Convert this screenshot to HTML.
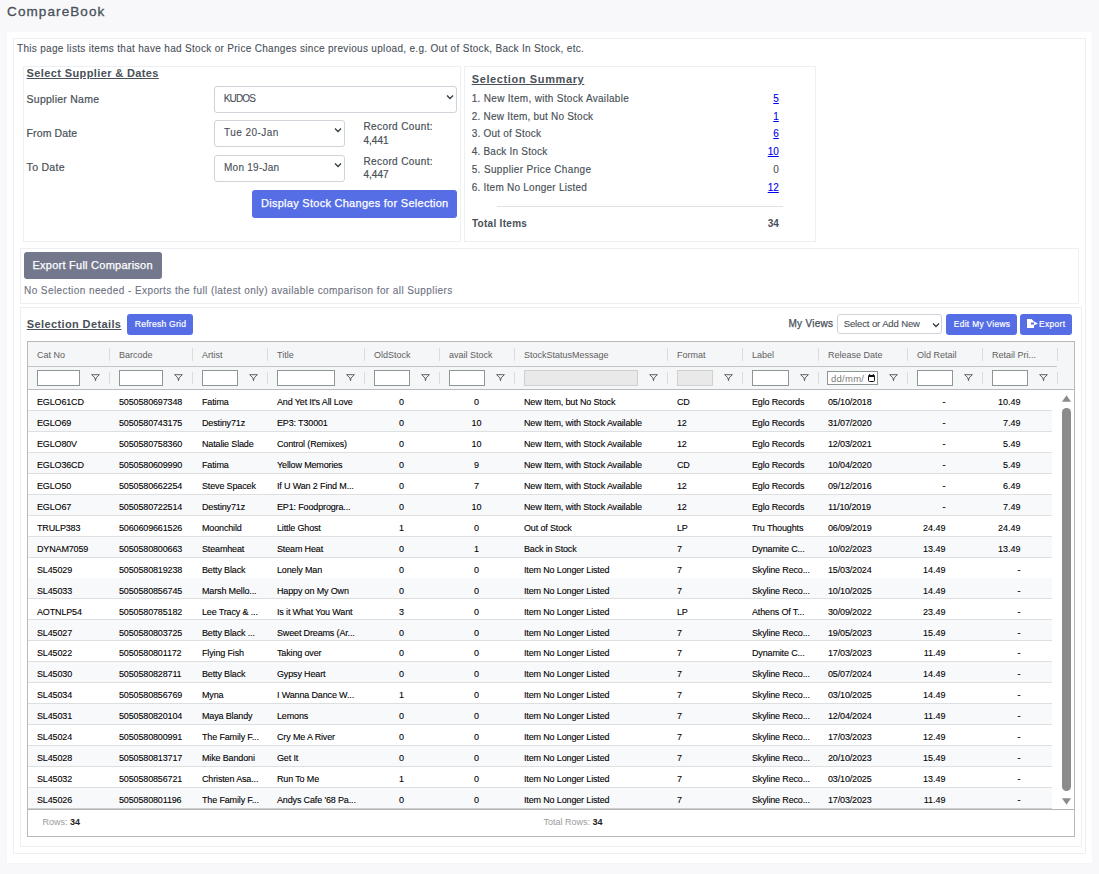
<!DOCTYPE html>
<html><head><meta charset="utf-8"><style>
html,body{margin:0;padding:0;}
body{width:1099px;height:874px;background:#f8f8fb;position:relative;overflow:hidden;font-family:"Liberation Sans",sans-serif;}
.t{position:absolute;white-space:pre;}
.b{position:absolute;}
</style></head><body>
<div class="b" style="left:7px;top:32px;width:1085px;height:831px;background:#fff;box-shadow:0 0 1px rgba(18,38,63,.06);"></div>
<div class="b" style="left:13px;top:38px;width:1073px;height:816px;border:1px solid #eeeff2;box-sizing:border-box;"></div>
<span class="t" style="left:7.10px;top:4.57px;font-size:13.5px;line-height:13.5px;color:#495057;letter-spacing:1.090px;-webkit-text-stroke:0.3px #495057;">CompareBook</span>
<span class="t" style="left:17.00px;top:44.33px;font-size:10px;line-height:10px;color:#495057;letter-spacing:0.312px;-webkit-text-stroke:0.1px #495057;">This page lists items that have had Stock or Price Changes since previous upload, e.g. Out of Stock, Back In Stock, etc.</span>
<div class="b" style="left:23px;top:66px;width:438px;height:176px;border:1px solid #eeeff2;box-sizing:border-box;"></div>
<span class="t" style="left:26.60px;top:67.69px;font-size:11px;line-height:11px;color:#495057;font-weight:bold;letter-spacing:0.382px;text-decoration:underline;">Select Supplier &amp; Dates</span>
<span class="t" style="left:26.60px;top:93.51px;font-size:10.5px;line-height:10.5px;color:#495057;letter-spacing:0.246px;-webkit-text-stroke:0.2px #495057;">Supplier Name</span>
<span class="t" style="left:26.60px;top:127.61px;font-size:10.5px;line-height:10.5px;color:#495057;letter-spacing:0.101px;-webkit-text-stroke:0.2px #495057;">From Date</span>
<span class="t" style="left:26.60px;top:162.11px;font-size:10.5px;line-height:10.5px;color:#495057;letter-spacing:0.286px;-webkit-text-stroke:0.2px #495057;">To Date</span>
<div class="b" style="left:214px;top:86px;width:243px;height:27px;border:1px solid #ced4da;border-radius:3px;box-sizing:border-box;background:#fff;"></div>
<span class="t" style="left:223.70px;top:93.94px;font-size:10px;line-height:10px;color:#495057;letter-spacing:-0.816px;-webkit-text-stroke:0.12px #495057;">KUDOS</span>
<div class="b" style="left:214px;top:120px;width:131px;height:27px;border:1px solid #ced4da;border-radius:3px;box-sizing:border-box;background:#fff;"></div>
<span class="t" style="left:224.10px;top:128.03px;font-size:10px;line-height:10px;color:#495057;letter-spacing:0.432px;-webkit-text-stroke:0.12px #495057;">Tue 20-Jan</span>
<div class="b" style="left:214px;top:155px;width:131px;height:27px;border:1px solid #ced4da;border-radius:3px;box-sizing:border-box;background:#fff;"></div>
<span class="t" style="left:224.00px;top:163.03px;font-size:10px;line-height:10px;color:#495057;letter-spacing:0.255px;-webkit-text-stroke:0.12px #495057;">Mon 19-Jan</span>
<svg class="b" style="left:445.5px;top:93.5px" width="8" height="6" viewBox="0 0 8 6"><path d="M1 1.5 L4 4.5 L7 1.5" fill="none" stroke="#343a40" stroke-width="1.3"/></svg>
<svg class="b" style="left:334px;top:127.30000000000001px" width="8" height="6" viewBox="0 0 8 6"><path d="M1 1.5 L4 4.5 L7 1.5" fill="none" stroke="#343a40" stroke-width="1.3"/></svg>
<svg class="b" style="left:334px;top:162.3px" width="8" height="6" viewBox="0 0 8 6"><path d="M1 1.5 L4 4.5 L7 1.5" fill="none" stroke="#343a40" stroke-width="1.3"/></svg>
<span class="t" style="left:363.50px;top:121.94px;font-size:10px;line-height:10px;color:#495057;letter-spacing:0.385px;-webkit-text-stroke:0.2px #495057;">Record Count:</span>
<span class="t" style="left:363.50px;top:135.84px;font-size:10px;line-height:10px;color:#495057;-webkit-text-stroke:0.2px #495057;">4,441</span>
<span class="t" style="left:363.50px;top:156.73px;font-size:10px;line-height:10px;color:#495057;letter-spacing:0.385px;-webkit-text-stroke:0.2px #495057;">Record Count:</span>
<span class="t" style="left:363.50px;top:170.44px;font-size:10px;line-height:10px;color:#495057;-webkit-text-stroke:0.2px #495057;">4,447</span>
<div class="b" style="left:252px;top:190px;width:205px;height:28px;background:#556ee6;border-radius:3px;"></div>
<span class="t" style="left:261.00px;top:197.69px;font-size:11px;line-height:11px;color:#fff;letter-spacing:0.273px;-webkit-text-stroke:0.25px #fff;">Display Stock Changes for Selection</span>
<div class="b" style="left:464px;top:66px;width:352px;height:176px;border:1px solid #eeeff2;box-sizing:border-box;"></div>
<span class="t" style="left:471.70px;top:73.99px;font-size:11px;line-height:11px;color:#495057;font-weight:bold;letter-spacing:0.619px;text-decoration:underline;">Selection Summary</span>
<span class="t" style="left:471.70px;top:93.73px;font-size:10px;line-height:10px;color:#495057;letter-spacing:0.312px;-webkit-text-stroke:0.15px #495057;">1. New Item, with Stock Available</span>
<span class="t" style="left:773.24px;top:93.73px;font-size:10px;line-height:10px;color:#0000ee;text-decoration:underline;-webkit-text-stroke:0.1px #0000ee;">5</span>
<span class="t" style="left:471.70px;top:111.53px;font-size:10px;line-height:10px;color:#495057;letter-spacing:0.22px;-webkit-text-stroke:0.15px #495057;">2. New Item, but No Stock</span>
<span class="t" style="left:773.24px;top:111.53px;font-size:10px;line-height:10px;color:#0000ee;text-decoration:underline;-webkit-text-stroke:0.1px #0000ee;">1</span>
<span class="t" style="left:471.70px;top:129.44px;font-size:10px;line-height:10px;color:#495057;letter-spacing:0.22px;-webkit-text-stroke:0.15px #495057;">3. Out of Stock</span>
<span class="t" style="left:773.24px;top:129.44px;font-size:10px;line-height:10px;color:#0000ee;text-decoration:underline;-webkit-text-stroke:0.1px #0000ee;">6</span>
<span class="t" style="left:471.70px;top:146.63px;font-size:10px;line-height:10px;color:#495057;letter-spacing:0.22px;-webkit-text-stroke:0.15px #495057;">4. Back In Stock</span>
<span class="t" style="left:767.68px;top:146.63px;font-size:10px;line-height:10px;color:#0000ee;text-decoration:underline;-webkit-text-stroke:0.1px #0000ee;">10</span>
<span class="t" style="left:471.70px;top:164.63px;font-size:10px;line-height:10px;color:#495057;letter-spacing:0.357px;-webkit-text-stroke:0.15px #495057;">5. Supplier Price Change</span>
<span class="t" style="left:773.24px;top:164.63px;font-size:10px;line-height:10px;color:#495057;-webkit-text-stroke:0.1px #495057;">0</span>
<span class="t" style="left:471.70px;top:182.53px;font-size:10px;line-height:10px;color:#495057;letter-spacing:0.247px;-webkit-text-stroke:0.15px #495057;">6. Item No Longer Listed</span>
<span class="t" style="left:767.68px;top:182.53px;font-size:10px;line-height:10px;color:#0000ee;text-decoration:underline;-webkit-text-stroke:0.1px #0000ee;">12</span>
<div class="b" style="left:497px;top:206px;width:286px;height:1px;background:#dfe2e6;"></div>
<span class="t" style="left:471.90px;top:218.53px;font-size:10px;line-height:10px;color:#495057;font-weight:bold;letter-spacing:0.295px;">Total Items</span>
<span class="t" style="left:767.68px;top:218.53px;font-size:10px;line-height:10px;color:#495057;font-weight:bold;">34</span>
<div class="b" style="left:20px;top:248px;width:1059px;height:56px;border:1px solid #eeeff2;box-sizing:border-box;"></div>
<div class="b" style="left:24px;top:252px;width:138px;height:27px;background:#74788d;border-radius:3px;"></div>
<span class="t" style="left:32.50px;top:259.69px;font-size:11px;line-height:11px;color:#fff;letter-spacing:0.246px;-webkit-text-stroke:0.25px #fff;">Export Full Comparison</span>
<span class="t" style="left:24.00px;top:286.24px;font-size:10px;line-height:10px;color:#6c717e;letter-spacing:0.417px;-webkit-text-stroke:0.1px #6c717e;">No Selection needed - Exports the full (latest only) available comparison for all Suppliers</span>
<div class="b" style="left:20px;top:307px;width:1062px;height:540px;border:1px solid #eeeff2;box-sizing:border-box;"></div>
<span class="t" style="left:26.80px;top:318.69px;font-size:11px;line-height:11px;color:#495057;font-weight:bold;letter-spacing:0.385px;text-decoration:underline;">Selection Details</span>
<div class="b" style="left:127px;top:314px;width:66px;height:21px;background:#556ee6;border-radius:3px;"></div>
<span class="t" style="left:134.80px;top:320.12px;font-size:8.6px;line-height:8.6px;color:#fff;letter-spacing:0.223px;-webkit-text-stroke:0.2px #fff;">Refresh Grid</span>
<span class="t" style="left:788.50px;top:319.04px;font-size:10px;line-height:10px;color:#495057;letter-spacing:0.271px;-webkit-text-stroke:0.25px #495057;">My Views</span>
<div class="b" style="left:837px;top:314px;width:105px;height:20px;border:1px solid #ced4da;border-radius:3px;box-sizing:border-box;background:#fff;"></div>
<span class="t" style="left:843.70px;top:318.76px;font-size:9.5px;line-height:9.5px;color:#495057;letter-spacing:-0.116px;-webkit-text-stroke:0.1px #495057;">Select or Add New</span>
<svg class="b" style="left:932px;top:321.5px" width="8" height="6" viewBox="0 0 8 6"><path d="M1 1.5 L4 4.5 L7 1.5" fill="none" stroke="#343a40" stroke-width="1.3"/></svg>
<div class="b" style="left:946px;top:314px;width:71px;height:21px;background:#556ee6;border-radius:3px;"></div>
<span class="t" style="left:953.80px;top:320.17px;font-size:8.3px;line-height:8.3px;color:#fff;letter-spacing:0.353px;-webkit-text-stroke:0.2px #fff;">Edit My Views</span>
<div class="b" style="left:1020px;top:314px;width:52px;height:21px;background:#556ee6;border-radius:3px;"></div>
<svg class="b" style="left:1026px;top:318px" width="13" height="11" viewBox="0 0 13 11"><path d="M1 1 H5.5 L8 3.5 V4.5 H5 V6.5 H8 V10 H1 Z" fill="#fff"/><path d="M8 3.5 L12 5.5 L8 7.5 Z" fill="#fff"/></svg>
<span class="t" style="left:1039.10px;top:320.17px;font-size:8.3px;line-height:8.3px;color:#fff;letter-spacing:0.382px;-webkit-text-stroke:0.2px #fff;">Export</span>
<div class="b" style="left:27px;top:341px;width:1048px;height:496px;border:1px solid #b9b9b9;box-sizing:border-box;background:#fff;"></div>
<div class="b" style="left:28px;top:342px;width:1046px;height:47px;background:#f5f6f7;"></div>
<div class="b" style="left:28px;top:366px;width:1029px;height:1px;background:#c3c6c9;"></div>
<div class="b" style="left:28px;top:389px;width:1046px;height:1px;background:#b9bcbf;"></div>
<div class="b" style="left:109px;top:348px;width:1px;height:13px;background:#dcdcdc;"></div>
<div class="b" style="left:109px;top:372px;width:1px;height:12px;background:#dcdcdc;"></div>
<div class="b" style="left:192px;top:348px;width:1px;height:13px;background:#dcdcdc;"></div>
<div class="b" style="left:192px;top:372px;width:1px;height:12px;background:#dcdcdc;"></div>
<div class="b" style="left:267px;top:348px;width:1px;height:13px;background:#dcdcdc;"></div>
<div class="b" style="left:267px;top:372px;width:1px;height:12px;background:#dcdcdc;"></div>
<div class="b" style="left:364px;top:348px;width:1px;height:13px;background:#dcdcdc;"></div>
<div class="b" style="left:364px;top:372px;width:1px;height:12px;background:#dcdcdc;"></div>
<div class="b" style="left:439px;top:348px;width:1px;height:13px;background:#dcdcdc;"></div>
<div class="b" style="left:439px;top:372px;width:1px;height:12px;background:#dcdcdc;"></div>
<div class="b" style="left:514px;top:348px;width:1px;height:13px;background:#dcdcdc;"></div>
<div class="b" style="left:514px;top:372px;width:1px;height:12px;background:#dcdcdc;"></div>
<div class="b" style="left:667px;top:348px;width:1px;height:13px;background:#dcdcdc;"></div>
<div class="b" style="left:667px;top:372px;width:1px;height:12px;background:#dcdcdc;"></div>
<div class="b" style="left:742px;top:348px;width:1px;height:13px;background:#dcdcdc;"></div>
<div class="b" style="left:742px;top:372px;width:1px;height:12px;background:#dcdcdc;"></div>
<div class="b" style="left:818px;top:348px;width:1px;height:13px;background:#dcdcdc;"></div>
<div class="b" style="left:818px;top:372px;width:1px;height:12px;background:#dcdcdc;"></div>
<div class="b" style="left:907px;top:348px;width:1px;height:13px;background:#dcdcdc;"></div>
<div class="b" style="left:907px;top:372px;width:1px;height:12px;background:#dcdcdc;"></div>
<div class="b" style="left:982px;top:348px;width:1px;height:13px;background:#dcdcdc;"></div>
<div class="b" style="left:982px;top:372px;width:1px;height:12px;background:#dcdcdc;"></div>
<div class="b" style="left:1057px;top:348px;width:1px;height:13px;background:#dcdcdc;"></div>
<div class="b" style="left:1057px;top:372px;width:1px;height:12px;background:#dcdcdc;"></div>
<span class="t" style="left:37.00px;top:350.88px;font-size:9px;line-height:9px;color:#606060;">Cat No</span>
<div class="b" style="left:37px;top:370px;width:43px;height:16px;background:#fff;border:1px solid #8a9794;box-sizing:border-box;"></div>
<svg class="b" style="left:90.5px;top:374px" width="9" height="8" viewBox="0 0 9 8"><path d="M0.6 0.7 H8.4 L5.1 3.9 L4.5 6.8 L3.9 3.9 Z" fill="none" stroke="#555b66" stroke-width="0.95" stroke-linejoin="round"/></svg>
<span class="t" style="left:119.00px;top:350.88px;font-size:9px;line-height:9px;color:#606060;">Barcode</span>
<div class="b" style="left:119px;top:370px;width:44px;height:16px;background:#fff;border:1px solid #8a9794;box-sizing:border-box;"></div>
<svg class="b" style="left:173.5px;top:374px" width="9" height="8" viewBox="0 0 9 8"><path d="M0.6 0.7 H8.4 L5.1 3.9 L4.5 6.8 L3.9 3.9 Z" fill="none" stroke="#555b66" stroke-width="0.95" stroke-linejoin="round"/></svg>
<span class="t" style="left:202.00px;top:350.88px;font-size:9px;line-height:9px;color:#606060;">Artist</span>
<div class="b" style="left:202px;top:370px;width:36px;height:16px;background:#fff;border:1px solid #8a9794;box-sizing:border-box;"></div>
<svg class="b" style="left:248.5px;top:374px" width="9" height="8" viewBox="0 0 9 8"><path d="M0.6 0.7 H8.4 L5.1 3.9 L4.5 6.8 L3.9 3.9 Z" fill="none" stroke="#555b66" stroke-width="0.95" stroke-linejoin="round"/></svg>
<span class="t" style="left:277.00px;top:350.88px;font-size:9px;line-height:9px;color:#606060;">Title</span>
<div class="b" style="left:277px;top:370px;width:58px;height:16px;background:#fff;border:1px solid #8a9794;box-sizing:border-box;"></div>
<svg class="b" style="left:345.5px;top:374px" width="9" height="8" viewBox="0 0 9 8"><path d="M0.6 0.7 H8.4 L5.1 3.9 L4.5 6.8 L3.9 3.9 Z" fill="none" stroke="#555b66" stroke-width="0.95" stroke-linejoin="round"/></svg>
<span class="t" style="left:374.00px;top:350.88px;font-size:9px;line-height:9px;color:#606060;">OldStock</span>
<div class="b" style="left:374px;top:370px;width:36px;height:16px;background:#fff;border:1px solid #8a9794;box-sizing:border-box;"></div>
<svg class="b" style="left:420.5px;top:374px" width="9" height="8" viewBox="0 0 9 8"><path d="M0.6 0.7 H8.4 L5.1 3.9 L4.5 6.8 L3.9 3.9 Z" fill="none" stroke="#555b66" stroke-width="0.95" stroke-linejoin="round"/></svg>
<span class="t" style="left:449.00px;top:350.88px;font-size:9px;line-height:9px;color:#606060;">avail Stock</span>
<div class="b" style="left:449px;top:370px;width:36px;height:16px;background:#fff;border:1px solid #8a9794;box-sizing:border-box;"></div>
<svg class="b" style="left:495.5px;top:374px" width="9" height="8" viewBox="0 0 9 8"><path d="M0.6 0.7 H8.4 L5.1 3.9 L4.5 6.8 L3.9 3.9 Z" fill="none" stroke="#555b66" stroke-width="0.95" stroke-linejoin="round"/></svg>
<span class="t" style="left:524.00px;top:350.88px;font-size:9px;line-height:9px;color:#606060;">StockStatusMessage</span>
<div class="b" style="left:524px;top:370px;width:114px;height:16px;background:#e9e9e9;border:1px solid #d0d0d0;box-sizing:border-box;"></div>
<svg class="b" style="left:648.5px;top:374px" width="9" height="8" viewBox="0 0 9 8"><path d="M0.6 0.7 H8.4 L5.1 3.9 L4.5 6.8 L3.9 3.9 Z" fill="none" stroke="#555b66" stroke-width="0.95" stroke-linejoin="round"/></svg>
<span class="t" style="left:677.00px;top:350.88px;font-size:9px;line-height:9px;color:#606060;">Format</span>
<div class="b" style="left:677px;top:370px;width:36px;height:16px;background:#e9e9e9;border:1px solid #d0d0d0;box-sizing:border-box;"></div>
<svg class="b" style="left:723.5px;top:374px" width="9" height="8" viewBox="0 0 9 8"><path d="M0.6 0.7 H8.4 L5.1 3.9 L4.5 6.8 L3.9 3.9 Z" fill="none" stroke="#555b66" stroke-width="0.95" stroke-linejoin="round"/></svg>
<span class="t" style="left:752.00px;top:350.88px;font-size:9px;line-height:9px;color:#606060;">Label</span>
<div class="b" style="left:752px;top:370px;width:37px;height:16px;background:#fff;border:1px solid #8a9794;box-sizing:border-box;"></div>
<svg class="b" style="left:799.5px;top:374px" width="9" height="8" viewBox="0 0 9 8"><path d="M0.6 0.7 H8.4 L5.1 3.9 L4.5 6.8 L3.9 3.9 Z" fill="none" stroke="#555b66" stroke-width="0.95" stroke-linejoin="round"/></svg>
<span class="t" style="left:828.00px;top:350.88px;font-size:9px;line-height:9px;color:#606060;">Release Date</span>
<div class="b" style="left:827px;top:371px;width:51px;height:14px;background:#fff;border:1px solid #8a9794;box-sizing:border-box;"></div>
<span class="t" style="left:831.00px;top:373.76px;font-size:9.5px;line-height:9.5px;color:#7a7a7a;letter-spacing:0.265px;">dd/mm/</span>
<svg class="b" style="left:868px;top:374px" width="7" height="8" viewBox="0 0 7 8"><rect x="0.5" y="1.5" width="6" height="6" rx="1" fill="none" stroke="#111" stroke-width="1"/><rect x="0.5" y="1" width="6" height="2" fill="#111"/><rect x="1.2" y="0" width="1" height="1.5" fill="#111"/><rect x="4.8" y="0" width="1" height="1.5" fill="#111"/></svg>
<svg class="b" style="left:888.5px;top:374px" width="9" height="8" viewBox="0 0 9 8"><path d="M0.6 0.7 H8.4 L5.1 3.9 L4.5 6.8 L3.9 3.9 Z" fill="none" stroke="#555b66" stroke-width="0.95" stroke-linejoin="round"/></svg>
<span class="t" style="left:917.00px;top:350.88px;font-size:9px;line-height:9px;color:#606060;">Old Retail</span>
<div class="b" style="left:917px;top:370px;width:36px;height:16px;background:#fff;border:1px solid #8a9794;box-sizing:border-box;"></div>
<svg class="b" style="left:963.5px;top:374px" width="9" height="8" viewBox="0 0 9 8"><path d="M0.6 0.7 H8.4 L5.1 3.9 L4.5 6.8 L3.9 3.9 Z" fill="none" stroke="#555b66" stroke-width="0.95" stroke-linejoin="round"/></svg>
<span class="t" style="left:992.00px;top:350.88px;font-size:9px;line-height:9px;color:#606060;">Retail Pri...</span>
<div class="b" style="left:992px;top:370px;width:36px;height:16px;background:#fff;border:1px solid #8a9794;box-sizing:border-box;"></div>
<svg class="b" style="left:1038.5px;top:374px" width="9" height="8" viewBox="0 0 9 8"><path d="M0.6 0.7 H8.4 L5.1 3.9 L4.5 6.8 L3.9 3.9 Z" fill="none" stroke="#555b66" stroke-width="0.95" stroke-linejoin="round"/></svg>
<div class="b" style="left:28px;top:410px;width:1024px;height:1px;background:#dedfe1;"></div>
<span class="t" style="left:37.00px;top:398.18px;font-size:9px;line-height:9px;color:#000;letter-spacing:-0.15px;-webkit-text-stroke:0.1px #000;">EGLO61CD</span>
<span class="t" style="left:119.00px;top:398.18px;font-size:9px;line-height:9px;color:#000;letter-spacing:-0.15px;-webkit-text-stroke:0.1px #000;">5050580697348</span>
<span class="t" style="left:202.00px;top:398.18px;font-size:9px;line-height:9px;color:#000;letter-spacing:-0.15px;-webkit-text-stroke:0.1px #000;">Fatima</span>
<span class="t" style="left:277.00px;top:398.18px;font-size:9px;line-height:9px;color:#000;letter-spacing:-0.15px;-webkit-text-stroke:0.1px #000;">And Yet It's All Love</span>
<span class="t" style="left:399.00px;top:398.18px;font-size:9px;line-height:9px;color:#000;-webkit-text-stroke:0.1px #000;">0</span>
<span class="t" style="left:474.00px;top:398.18px;font-size:9px;line-height:9px;color:#000;-webkit-text-stroke:0.1px #000;">0</span>
<span class="t" style="left:524.00px;top:398.18px;font-size:9px;line-height:9px;color:#000;letter-spacing:-0.15px;-webkit-text-stroke:0.1px #000;">New Item, but No Stock</span>
<span class="t" style="left:677.00px;top:398.18px;font-size:9px;line-height:9px;color:#000;letter-spacing:-0.15px;-webkit-text-stroke:0.1px #000;">CD</span>
<span class="t" style="left:752.00px;top:398.18px;font-size:9px;line-height:9px;color:#000;letter-spacing:-0.15px;-webkit-text-stroke:0.1px #000;">Eglo Records</span>
<span class="t" style="left:828.00px;top:398.18px;font-size:9px;line-height:9px;color:#000;letter-spacing:-0.15px;-webkit-text-stroke:0.1px #000;">05/10/2018</span>
<span class="t" style="left:942.50px;top:398.18px;font-size:9px;line-height:9px;color:#000;-webkit-text-stroke:0.1px #000;">-</span>
<span class="t" style="left:997.98px;top:398.18px;font-size:9px;line-height:9px;color:#000;-webkit-text-stroke:0.1px #000;">10.49</span>
<div class="b" style="left:28px;top:411px;width:1024px;height:20px;background:#f8f9fb;"></div>
<div class="b" style="left:28px;top:431px;width:1024px;height:1px;background:#dedfe1;"></div>
<span class="t" style="left:37.00px;top:419.12px;font-size:9px;line-height:9px;color:#000;letter-spacing:-0.15px;-webkit-text-stroke:0.1px #000;">EGLO69</span>
<span class="t" style="left:119.00px;top:419.12px;font-size:9px;line-height:9px;color:#000;letter-spacing:-0.15px;-webkit-text-stroke:0.1px #000;">5050580743175</span>
<span class="t" style="left:202.00px;top:419.12px;font-size:9px;line-height:9px;color:#000;letter-spacing:-0.15px;-webkit-text-stroke:0.1px #000;">Destiny71z</span>
<span class="t" style="left:277.00px;top:419.12px;font-size:9px;line-height:9px;color:#000;letter-spacing:-0.15px;-webkit-text-stroke:0.1px #000;">EP3: T30001</span>
<span class="t" style="left:399.00px;top:419.12px;font-size:9px;line-height:9px;color:#000;-webkit-text-stroke:0.1px #000;">0</span>
<span class="t" style="left:471.49px;top:419.12px;font-size:9px;line-height:9px;color:#000;-webkit-text-stroke:0.1px #000;">10</span>
<span class="t" style="left:524.00px;top:419.12px;font-size:9px;line-height:9px;color:#000;letter-spacing:-0.15px;-webkit-text-stroke:0.1px #000;">New Item, with Stock Available</span>
<span class="t" style="left:677.00px;top:419.12px;font-size:9px;line-height:9px;color:#000;letter-spacing:-0.15px;-webkit-text-stroke:0.1px #000;">12</span>
<span class="t" style="left:752.00px;top:419.12px;font-size:9px;line-height:9px;color:#000;letter-spacing:-0.15px;-webkit-text-stroke:0.1px #000;">Eglo Records</span>
<span class="t" style="left:828.00px;top:419.12px;font-size:9px;line-height:9px;color:#000;letter-spacing:-0.15px;-webkit-text-stroke:0.1px #000;">31/07/2020</span>
<span class="t" style="left:942.50px;top:419.12px;font-size:9px;line-height:9px;color:#000;-webkit-text-stroke:0.1px #000;">-</span>
<span class="t" style="left:1002.98px;top:419.12px;font-size:9px;line-height:9px;color:#000;-webkit-text-stroke:0.1px #000;">7.49</span>
<div class="b" style="left:28px;top:452px;width:1024px;height:1px;background:#dedfe1;"></div>
<span class="t" style="left:37.00px;top:440.06px;font-size:9px;line-height:9px;color:#000;letter-spacing:-0.15px;-webkit-text-stroke:0.1px #000;">EGLO80V</span>
<span class="t" style="left:119.00px;top:440.06px;font-size:9px;line-height:9px;color:#000;letter-spacing:-0.15px;-webkit-text-stroke:0.1px #000;">5050580758360</span>
<span class="t" style="left:202.00px;top:440.06px;font-size:9px;line-height:9px;color:#000;letter-spacing:-0.15px;-webkit-text-stroke:0.1px #000;">Natalie Slade</span>
<span class="t" style="left:277.00px;top:440.06px;font-size:9px;line-height:9px;color:#000;letter-spacing:-0.15px;-webkit-text-stroke:0.1px #000;">Control (Remixes)</span>
<span class="t" style="left:399.00px;top:440.06px;font-size:9px;line-height:9px;color:#000;-webkit-text-stroke:0.1px #000;">0</span>
<span class="t" style="left:471.49px;top:440.06px;font-size:9px;line-height:9px;color:#000;-webkit-text-stroke:0.1px #000;">10</span>
<span class="t" style="left:524.00px;top:440.06px;font-size:9px;line-height:9px;color:#000;letter-spacing:-0.15px;-webkit-text-stroke:0.1px #000;">New Item, with Stock Available</span>
<span class="t" style="left:677.00px;top:440.06px;font-size:9px;line-height:9px;color:#000;letter-spacing:-0.15px;-webkit-text-stroke:0.1px #000;">12</span>
<span class="t" style="left:752.00px;top:440.06px;font-size:9px;line-height:9px;color:#000;letter-spacing:-0.15px;-webkit-text-stroke:0.1px #000;">Eglo Records</span>
<span class="t" style="left:828.00px;top:440.06px;font-size:9px;line-height:9px;color:#000;letter-spacing:-0.15px;-webkit-text-stroke:0.1px #000;">12/03/2021</span>
<span class="t" style="left:942.50px;top:440.06px;font-size:9px;line-height:9px;color:#000;-webkit-text-stroke:0.1px #000;">-</span>
<span class="t" style="left:1002.98px;top:440.06px;font-size:9px;line-height:9px;color:#000;-webkit-text-stroke:0.1px #000;">5.49</span>
<div class="b" style="left:28px;top:453px;width:1024px;height:20px;background:#f8f9fb;"></div>
<div class="b" style="left:28px;top:473px;width:1024px;height:1px;background:#dedfe1;"></div>
<span class="t" style="left:37.00px;top:461.00px;font-size:9px;line-height:9px;color:#000;letter-spacing:-0.15px;-webkit-text-stroke:0.1px #000;">EGLO36CD</span>
<span class="t" style="left:119.00px;top:461.00px;font-size:9px;line-height:9px;color:#000;letter-spacing:-0.15px;-webkit-text-stroke:0.1px #000;">5050580609990</span>
<span class="t" style="left:202.00px;top:461.00px;font-size:9px;line-height:9px;color:#000;letter-spacing:-0.15px;-webkit-text-stroke:0.1px #000;">Fatima</span>
<span class="t" style="left:277.00px;top:461.00px;font-size:9px;line-height:9px;color:#000;letter-spacing:-0.15px;-webkit-text-stroke:0.1px #000;">Yellow Memories</span>
<span class="t" style="left:399.00px;top:461.00px;font-size:9px;line-height:9px;color:#000;-webkit-text-stroke:0.1px #000;">0</span>
<span class="t" style="left:474.00px;top:461.00px;font-size:9px;line-height:9px;color:#000;-webkit-text-stroke:0.1px #000;">9</span>
<span class="t" style="left:524.00px;top:461.00px;font-size:9px;line-height:9px;color:#000;letter-spacing:-0.15px;-webkit-text-stroke:0.1px #000;">New Item, with Stock Available</span>
<span class="t" style="left:677.00px;top:461.00px;font-size:9px;line-height:9px;color:#000;letter-spacing:-0.15px;-webkit-text-stroke:0.1px #000;">CD</span>
<span class="t" style="left:752.00px;top:461.00px;font-size:9px;line-height:9px;color:#000;letter-spacing:-0.15px;-webkit-text-stroke:0.1px #000;">Eglo Records</span>
<span class="t" style="left:828.00px;top:461.00px;font-size:9px;line-height:9px;color:#000;letter-spacing:-0.15px;-webkit-text-stroke:0.1px #000;">10/04/2020</span>
<span class="t" style="left:942.50px;top:461.00px;font-size:9px;line-height:9px;color:#000;-webkit-text-stroke:0.1px #000;">-</span>
<span class="t" style="left:1002.98px;top:461.00px;font-size:9px;line-height:9px;color:#000;-webkit-text-stroke:0.1px #000;">5.49</span>
<div class="b" style="left:28px;top:494px;width:1024px;height:1px;background:#dedfe1;"></div>
<span class="t" style="left:37.00px;top:481.94px;font-size:9px;line-height:9px;color:#000;letter-spacing:-0.15px;-webkit-text-stroke:0.1px #000;">EGLO50</span>
<span class="t" style="left:119.00px;top:481.94px;font-size:9px;line-height:9px;color:#000;letter-spacing:-0.15px;-webkit-text-stroke:0.1px #000;">5050580662254</span>
<span class="t" style="left:202.00px;top:481.94px;font-size:9px;line-height:9px;color:#000;letter-spacing:-0.15px;-webkit-text-stroke:0.1px #000;">Steve Spacek</span>
<span class="t" style="left:277.00px;top:481.94px;font-size:9px;line-height:9px;color:#000;letter-spacing:-0.15px;-webkit-text-stroke:0.1px #000;">If U Wan 2 Find M...</span>
<span class="t" style="left:399.00px;top:481.94px;font-size:9px;line-height:9px;color:#000;-webkit-text-stroke:0.1px #000;">0</span>
<span class="t" style="left:474.00px;top:481.94px;font-size:9px;line-height:9px;color:#000;-webkit-text-stroke:0.1px #000;">7</span>
<span class="t" style="left:524.00px;top:481.94px;font-size:9px;line-height:9px;color:#000;letter-spacing:-0.15px;-webkit-text-stroke:0.1px #000;">New Item, with Stock Available</span>
<span class="t" style="left:677.00px;top:481.94px;font-size:9px;line-height:9px;color:#000;letter-spacing:-0.15px;-webkit-text-stroke:0.1px #000;">12</span>
<span class="t" style="left:752.00px;top:481.94px;font-size:9px;line-height:9px;color:#000;letter-spacing:-0.15px;-webkit-text-stroke:0.1px #000;">Eglo Records</span>
<span class="t" style="left:828.00px;top:481.94px;font-size:9px;line-height:9px;color:#000;letter-spacing:-0.15px;-webkit-text-stroke:0.1px #000;">09/12/2016</span>
<span class="t" style="left:942.50px;top:481.94px;font-size:9px;line-height:9px;color:#000;-webkit-text-stroke:0.1px #000;">-</span>
<span class="t" style="left:1002.98px;top:481.94px;font-size:9px;line-height:9px;color:#000;-webkit-text-stroke:0.1px #000;">6.49</span>
<div class="b" style="left:28px;top:495px;width:1024px;height:20px;background:#f8f9fb;"></div>
<div class="b" style="left:28px;top:515px;width:1024px;height:1px;background:#dedfe1;"></div>
<span class="t" style="left:37.00px;top:502.88px;font-size:9px;line-height:9px;color:#000;letter-spacing:-0.15px;-webkit-text-stroke:0.1px #000;">EGLO67</span>
<span class="t" style="left:119.00px;top:502.88px;font-size:9px;line-height:9px;color:#000;letter-spacing:-0.15px;-webkit-text-stroke:0.1px #000;">5050580722514</span>
<span class="t" style="left:202.00px;top:502.88px;font-size:9px;line-height:9px;color:#000;letter-spacing:-0.15px;-webkit-text-stroke:0.1px #000;">Destiny71z</span>
<span class="t" style="left:277.00px;top:502.88px;font-size:9px;line-height:9px;color:#000;letter-spacing:-0.15px;-webkit-text-stroke:0.1px #000;">EP1: Foodprogra...</span>
<span class="t" style="left:399.00px;top:502.88px;font-size:9px;line-height:9px;color:#000;-webkit-text-stroke:0.1px #000;">0</span>
<span class="t" style="left:471.49px;top:502.88px;font-size:9px;line-height:9px;color:#000;-webkit-text-stroke:0.1px #000;">10</span>
<span class="t" style="left:524.00px;top:502.88px;font-size:9px;line-height:9px;color:#000;letter-spacing:-0.15px;-webkit-text-stroke:0.1px #000;">New Item, with Stock Available</span>
<span class="t" style="left:677.00px;top:502.88px;font-size:9px;line-height:9px;color:#000;letter-spacing:-0.15px;-webkit-text-stroke:0.1px #000;">12</span>
<span class="t" style="left:752.00px;top:502.88px;font-size:9px;line-height:9px;color:#000;letter-spacing:-0.15px;-webkit-text-stroke:0.1px #000;">Eglo Records</span>
<span class="t" style="left:828.00px;top:502.88px;font-size:9px;line-height:9px;color:#000;letter-spacing:-0.15px;-webkit-text-stroke:0.1px #000;">11/10/2019</span>
<span class="t" style="left:942.50px;top:502.88px;font-size:9px;line-height:9px;color:#000;-webkit-text-stroke:0.1px #000;">-</span>
<span class="t" style="left:1002.98px;top:502.88px;font-size:9px;line-height:9px;color:#000;-webkit-text-stroke:0.1px #000;">7.49</span>
<div class="b" style="left:28px;top:536px;width:1024px;height:1px;background:#dedfe1;"></div>
<span class="t" style="left:37.00px;top:523.82px;font-size:9px;line-height:9px;color:#000;letter-spacing:-0.15px;-webkit-text-stroke:0.1px #000;">TRULP383</span>
<span class="t" style="left:119.00px;top:523.82px;font-size:9px;line-height:9px;color:#000;letter-spacing:-0.15px;-webkit-text-stroke:0.1px #000;">5060609661526</span>
<span class="t" style="left:202.00px;top:523.82px;font-size:9px;line-height:9px;color:#000;letter-spacing:-0.15px;-webkit-text-stroke:0.1px #000;">Moonchild</span>
<span class="t" style="left:277.00px;top:523.82px;font-size:9px;line-height:9px;color:#000;letter-spacing:-0.15px;-webkit-text-stroke:0.1px #000;">Little Ghost</span>
<span class="t" style="left:399.00px;top:523.82px;font-size:9px;line-height:9px;color:#000;-webkit-text-stroke:0.1px #000;">1</span>
<span class="t" style="left:474.00px;top:523.82px;font-size:9px;line-height:9px;color:#000;-webkit-text-stroke:0.1px #000;">0</span>
<span class="t" style="left:524.00px;top:523.82px;font-size:9px;line-height:9px;color:#000;letter-spacing:-0.15px;-webkit-text-stroke:0.1px #000;">Out of Stock</span>
<span class="t" style="left:677.00px;top:523.82px;font-size:9px;line-height:9px;color:#000;letter-spacing:-0.15px;-webkit-text-stroke:0.1px #000;">LP</span>
<span class="t" style="left:752.00px;top:523.82px;font-size:9px;line-height:9px;color:#000;letter-spacing:-0.15px;-webkit-text-stroke:0.1px #000;">Tru Thoughts</span>
<span class="t" style="left:828.00px;top:523.82px;font-size:9px;line-height:9px;color:#000;letter-spacing:-0.15px;-webkit-text-stroke:0.1px #000;">06/09/2019</span>
<span class="t" style="left:922.98px;top:523.82px;font-size:9px;line-height:9px;color:#000;-webkit-text-stroke:0.1px #000;">24.49</span>
<span class="t" style="left:997.98px;top:523.82px;font-size:9px;line-height:9px;color:#000;-webkit-text-stroke:0.1px #000;">24.49</span>
<div class="b" style="left:28px;top:537px;width:1024px;height:20px;background:#f8f9fb;"></div>
<div class="b" style="left:28px;top:557px;width:1024px;height:1px;background:#dedfe1;"></div>
<span class="t" style="left:37.00px;top:544.76px;font-size:9px;line-height:9px;color:#000;letter-spacing:-0.15px;-webkit-text-stroke:0.1px #000;">DYNAM7059</span>
<span class="t" style="left:119.00px;top:544.76px;font-size:9px;line-height:9px;color:#000;letter-spacing:-0.15px;-webkit-text-stroke:0.1px #000;">5050580800663</span>
<span class="t" style="left:202.00px;top:544.76px;font-size:9px;line-height:9px;color:#000;letter-spacing:-0.15px;-webkit-text-stroke:0.1px #000;">Steamheat</span>
<span class="t" style="left:277.00px;top:544.76px;font-size:9px;line-height:9px;color:#000;letter-spacing:-0.15px;-webkit-text-stroke:0.1px #000;">Steam Heat</span>
<span class="t" style="left:399.00px;top:544.76px;font-size:9px;line-height:9px;color:#000;-webkit-text-stroke:0.1px #000;">0</span>
<span class="t" style="left:474.00px;top:544.76px;font-size:9px;line-height:9px;color:#000;-webkit-text-stroke:0.1px #000;">1</span>
<span class="t" style="left:524.00px;top:544.76px;font-size:9px;line-height:9px;color:#000;letter-spacing:-0.15px;-webkit-text-stroke:0.1px #000;">Back in Stock</span>
<span class="t" style="left:677.00px;top:544.76px;font-size:9px;line-height:9px;color:#000;letter-spacing:-0.15px;-webkit-text-stroke:0.1px #000;">7</span>
<span class="t" style="left:752.00px;top:544.76px;font-size:9px;line-height:9px;color:#000;letter-spacing:-0.15px;-webkit-text-stroke:0.1px #000;">Dynamite C...</span>
<span class="t" style="left:828.00px;top:544.76px;font-size:9px;line-height:9px;color:#000;letter-spacing:-0.15px;-webkit-text-stroke:0.1px #000;">10/02/2023</span>
<span class="t" style="left:922.98px;top:544.76px;font-size:9px;line-height:9px;color:#000;-webkit-text-stroke:0.1px #000;">13.49</span>
<span class="t" style="left:997.98px;top:544.76px;font-size:9px;line-height:9px;color:#000;-webkit-text-stroke:0.1px #000;">13.49</span>
<div class="b" style="left:28px;top:578px;width:1024px;height:1px;background:#dedfe1;"></div>
<span class="t" style="left:37.00px;top:565.70px;font-size:9px;line-height:9px;color:#000;letter-spacing:-0.15px;-webkit-text-stroke:0.1px #000;">SL45029</span>
<span class="t" style="left:119.00px;top:565.70px;font-size:9px;line-height:9px;color:#000;letter-spacing:-0.15px;-webkit-text-stroke:0.1px #000;">5050580819238</span>
<span class="t" style="left:202.00px;top:565.70px;font-size:9px;line-height:9px;color:#000;letter-spacing:-0.15px;-webkit-text-stroke:0.1px #000;">Betty Black</span>
<span class="t" style="left:277.00px;top:565.70px;font-size:9px;line-height:9px;color:#000;letter-spacing:-0.15px;-webkit-text-stroke:0.1px #000;">Lonely Man</span>
<span class="t" style="left:399.00px;top:565.70px;font-size:9px;line-height:9px;color:#000;-webkit-text-stroke:0.1px #000;">0</span>
<span class="t" style="left:474.00px;top:565.70px;font-size:9px;line-height:9px;color:#000;-webkit-text-stroke:0.1px #000;">0</span>
<span class="t" style="left:524.00px;top:565.70px;font-size:9px;line-height:9px;color:#000;letter-spacing:-0.15px;-webkit-text-stroke:0.1px #000;">Item No Longer Listed</span>
<span class="t" style="left:677.00px;top:565.70px;font-size:9px;line-height:9px;color:#000;letter-spacing:-0.15px;-webkit-text-stroke:0.1px #000;">7</span>
<span class="t" style="left:752.00px;top:565.70px;font-size:9px;line-height:9px;color:#000;letter-spacing:-0.15px;-webkit-text-stroke:0.1px #000;">Skyline Reco...</span>
<span class="t" style="left:828.00px;top:565.70px;font-size:9px;line-height:9px;color:#000;letter-spacing:-0.15px;-webkit-text-stroke:0.1px #000;">15/03/2024</span>
<span class="t" style="left:922.98px;top:565.70px;font-size:9px;line-height:9px;color:#000;-webkit-text-stroke:0.1px #000;">14.49</span>
<span class="t" style="left:1017.50px;top:565.70px;font-size:9px;line-height:9px;color:#000;-webkit-text-stroke:0.1px #000;">-</span>
<div class="b" style="left:28px;top:578px;width:1024px;height:20px;background:#f8f9fb;"></div>
<div class="b" style="left:28px;top:598px;width:1024px;height:1px;background:#dedfe1;"></div>
<span class="t" style="left:37.00px;top:586.64px;font-size:9px;line-height:9px;color:#000;letter-spacing:-0.15px;-webkit-text-stroke:0.1px #000;">SL45033</span>
<span class="t" style="left:119.00px;top:586.64px;font-size:9px;line-height:9px;color:#000;letter-spacing:-0.15px;-webkit-text-stroke:0.1px #000;">5050580856745</span>
<span class="t" style="left:202.00px;top:586.64px;font-size:9px;line-height:9px;color:#000;letter-spacing:-0.15px;-webkit-text-stroke:0.1px #000;">Marsh Mello...</span>
<span class="t" style="left:277.00px;top:586.64px;font-size:9px;line-height:9px;color:#000;letter-spacing:-0.15px;-webkit-text-stroke:0.1px #000;">Happy on My Own</span>
<span class="t" style="left:399.00px;top:586.64px;font-size:9px;line-height:9px;color:#000;-webkit-text-stroke:0.1px #000;">0</span>
<span class="t" style="left:474.00px;top:586.64px;font-size:9px;line-height:9px;color:#000;-webkit-text-stroke:0.1px #000;">0</span>
<span class="t" style="left:524.00px;top:586.64px;font-size:9px;line-height:9px;color:#000;letter-spacing:-0.15px;-webkit-text-stroke:0.1px #000;">Item No Longer Listed</span>
<span class="t" style="left:677.00px;top:586.64px;font-size:9px;line-height:9px;color:#000;letter-spacing:-0.15px;-webkit-text-stroke:0.1px #000;">7</span>
<span class="t" style="left:752.00px;top:586.64px;font-size:9px;line-height:9px;color:#000;letter-spacing:-0.15px;-webkit-text-stroke:0.1px #000;">Skyline Reco...</span>
<span class="t" style="left:828.00px;top:586.64px;font-size:9px;line-height:9px;color:#000;letter-spacing:-0.15px;-webkit-text-stroke:0.1px #000;">10/10/2025</span>
<span class="t" style="left:922.98px;top:586.64px;font-size:9px;line-height:9px;color:#000;-webkit-text-stroke:0.1px #000;">14.49</span>
<span class="t" style="left:1017.50px;top:586.64px;font-size:9px;line-height:9px;color:#000;-webkit-text-stroke:0.1px #000;">-</span>
<div class="b" style="left:28px;top:619px;width:1024px;height:1px;background:#dedfe1;"></div>
<span class="t" style="left:37.00px;top:607.58px;font-size:9px;line-height:9px;color:#000;letter-spacing:-0.15px;-webkit-text-stroke:0.1px #000;">AOTNLP54</span>
<span class="t" style="left:119.00px;top:607.58px;font-size:9px;line-height:9px;color:#000;letter-spacing:-0.15px;-webkit-text-stroke:0.1px #000;">5050580785182</span>
<span class="t" style="left:202.00px;top:607.58px;font-size:9px;line-height:9px;color:#000;letter-spacing:-0.15px;-webkit-text-stroke:0.1px #000;">Lee Tracy &amp; ...</span>
<span class="t" style="left:277.00px;top:607.58px;font-size:9px;line-height:9px;color:#000;letter-spacing:-0.15px;-webkit-text-stroke:0.1px #000;">Is it What You Want</span>
<span class="t" style="left:399.00px;top:607.58px;font-size:9px;line-height:9px;color:#000;-webkit-text-stroke:0.1px #000;">3</span>
<span class="t" style="left:474.00px;top:607.58px;font-size:9px;line-height:9px;color:#000;-webkit-text-stroke:0.1px #000;">0</span>
<span class="t" style="left:524.00px;top:607.58px;font-size:9px;line-height:9px;color:#000;letter-spacing:-0.15px;-webkit-text-stroke:0.1px #000;">Item No Longer Listed</span>
<span class="t" style="left:677.00px;top:607.58px;font-size:9px;line-height:9px;color:#000;letter-spacing:-0.15px;-webkit-text-stroke:0.1px #000;">LP</span>
<span class="t" style="left:752.00px;top:607.58px;font-size:9px;line-height:9px;color:#000;letter-spacing:-0.15px;-webkit-text-stroke:0.1px #000;">Athens Of T...</span>
<span class="t" style="left:828.00px;top:607.58px;font-size:9px;line-height:9px;color:#000;letter-spacing:-0.15px;-webkit-text-stroke:0.1px #000;">30/09/2022</span>
<span class="t" style="left:922.98px;top:607.58px;font-size:9px;line-height:9px;color:#000;-webkit-text-stroke:0.1px #000;">23.49</span>
<span class="t" style="left:1017.50px;top:607.58px;font-size:9px;line-height:9px;color:#000;-webkit-text-stroke:0.1px #000;">-</span>
<div class="b" style="left:28px;top:620px;width:1024px;height:20px;background:#f8f9fb;"></div>
<div class="b" style="left:28px;top:640px;width:1024px;height:1px;background:#dedfe1;"></div>
<span class="t" style="left:37.00px;top:628.52px;font-size:9px;line-height:9px;color:#000;letter-spacing:-0.15px;-webkit-text-stroke:0.1px #000;">SL45027</span>
<span class="t" style="left:119.00px;top:628.52px;font-size:9px;line-height:9px;color:#000;letter-spacing:-0.15px;-webkit-text-stroke:0.1px #000;">5050580803725</span>
<span class="t" style="left:202.00px;top:628.52px;font-size:9px;line-height:9px;color:#000;letter-spacing:-0.15px;-webkit-text-stroke:0.1px #000;">Betty Black ...</span>
<span class="t" style="left:277.00px;top:628.52px;font-size:9px;line-height:9px;color:#000;letter-spacing:-0.15px;-webkit-text-stroke:0.1px #000;">Sweet Dreams (Ar...</span>
<span class="t" style="left:399.00px;top:628.52px;font-size:9px;line-height:9px;color:#000;-webkit-text-stroke:0.1px #000;">0</span>
<span class="t" style="left:474.00px;top:628.52px;font-size:9px;line-height:9px;color:#000;-webkit-text-stroke:0.1px #000;">0</span>
<span class="t" style="left:524.00px;top:628.52px;font-size:9px;line-height:9px;color:#000;letter-spacing:-0.15px;-webkit-text-stroke:0.1px #000;">Item No Longer Listed</span>
<span class="t" style="left:677.00px;top:628.52px;font-size:9px;line-height:9px;color:#000;letter-spacing:-0.15px;-webkit-text-stroke:0.1px #000;">7</span>
<span class="t" style="left:752.00px;top:628.52px;font-size:9px;line-height:9px;color:#000;letter-spacing:-0.15px;-webkit-text-stroke:0.1px #000;">Skyline Reco...</span>
<span class="t" style="left:828.00px;top:628.52px;font-size:9px;line-height:9px;color:#000;letter-spacing:-0.15px;-webkit-text-stroke:0.1px #000;">19/05/2023</span>
<span class="t" style="left:922.98px;top:628.52px;font-size:9px;line-height:9px;color:#000;-webkit-text-stroke:0.1px #000;">15.49</span>
<span class="t" style="left:1017.50px;top:628.52px;font-size:9px;line-height:9px;color:#000;-webkit-text-stroke:0.1px #000;">-</span>
<div class="b" style="left:28px;top:661px;width:1024px;height:1px;background:#dedfe1;"></div>
<span class="t" style="left:37.00px;top:649.46px;font-size:9px;line-height:9px;color:#000;letter-spacing:-0.15px;-webkit-text-stroke:0.1px #000;">SL45022</span>
<span class="t" style="left:119.00px;top:649.46px;font-size:9px;line-height:9px;color:#000;letter-spacing:-0.15px;-webkit-text-stroke:0.1px #000;">5050580801172</span>
<span class="t" style="left:202.00px;top:649.46px;font-size:9px;line-height:9px;color:#000;letter-spacing:-0.15px;-webkit-text-stroke:0.1px #000;">Flying Fish</span>
<span class="t" style="left:277.00px;top:649.46px;font-size:9px;line-height:9px;color:#000;letter-spacing:-0.15px;-webkit-text-stroke:0.1px #000;">Taking over</span>
<span class="t" style="left:399.00px;top:649.46px;font-size:9px;line-height:9px;color:#000;-webkit-text-stroke:0.1px #000;">0</span>
<span class="t" style="left:474.00px;top:649.46px;font-size:9px;line-height:9px;color:#000;-webkit-text-stroke:0.1px #000;">0</span>
<span class="t" style="left:524.00px;top:649.46px;font-size:9px;line-height:9px;color:#000;letter-spacing:-0.15px;-webkit-text-stroke:0.1px #000;">Item No Longer Listed</span>
<span class="t" style="left:677.00px;top:649.46px;font-size:9px;line-height:9px;color:#000;letter-spacing:-0.15px;-webkit-text-stroke:0.1px #000;">7</span>
<span class="t" style="left:752.00px;top:649.46px;font-size:9px;line-height:9px;color:#000;letter-spacing:-0.15px;-webkit-text-stroke:0.1px #000;">Dynamite C...</span>
<span class="t" style="left:828.00px;top:649.46px;font-size:9px;line-height:9px;color:#000;letter-spacing:-0.15px;-webkit-text-stroke:0.1px #000;">17/03/2023</span>
<span class="t" style="left:923.65px;top:649.46px;font-size:9px;line-height:9px;color:#000;-webkit-text-stroke:0.1px #000;">11.49</span>
<span class="t" style="left:1017.50px;top:649.46px;font-size:9px;line-height:9px;color:#000;-webkit-text-stroke:0.1px #000;">-</span>
<div class="b" style="left:28px;top:662px;width:1024px;height:20px;background:#f8f9fb;"></div>
<div class="b" style="left:28px;top:682px;width:1024px;height:1px;background:#dedfe1;"></div>
<span class="t" style="left:37.00px;top:670.40px;font-size:9px;line-height:9px;color:#000;letter-spacing:-0.15px;-webkit-text-stroke:0.1px #000;">SL45030</span>
<span class="t" style="left:119.00px;top:670.40px;font-size:9px;line-height:9px;color:#000;letter-spacing:-0.15px;-webkit-text-stroke:0.1px #000;">5050580828711</span>
<span class="t" style="left:202.00px;top:670.40px;font-size:9px;line-height:9px;color:#000;letter-spacing:-0.15px;-webkit-text-stroke:0.1px #000;">Betty Black</span>
<span class="t" style="left:277.00px;top:670.40px;font-size:9px;line-height:9px;color:#000;letter-spacing:-0.15px;-webkit-text-stroke:0.1px #000;">Gypsy Heart</span>
<span class="t" style="left:399.00px;top:670.40px;font-size:9px;line-height:9px;color:#000;-webkit-text-stroke:0.1px #000;">0</span>
<span class="t" style="left:474.00px;top:670.40px;font-size:9px;line-height:9px;color:#000;-webkit-text-stroke:0.1px #000;">0</span>
<span class="t" style="left:524.00px;top:670.40px;font-size:9px;line-height:9px;color:#000;letter-spacing:-0.15px;-webkit-text-stroke:0.1px #000;">Item No Longer Listed</span>
<span class="t" style="left:677.00px;top:670.40px;font-size:9px;line-height:9px;color:#000;letter-spacing:-0.15px;-webkit-text-stroke:0.1px #000;">7</span>
<span class="t" style="left:752.00px;top:670.40px;font-size:9px;line-height:9px;color:#000;letter-spacing:-0.15px;-webkit-text-stroke:0.1px #000;">Skyline Reco...</span>
<span class="t" style="left:828.00px;top:670.40px;font-size:9px;line-height:9px;color:#000;letter-spacing:-0.15px;-webkit-text-stroke:0.1px #000;">05/07/2024</span>
<span class="t" style="left:922.98px;top:670.40px;font-size:9px;line-height:9px;color:#000;-webkit-text-stroke:0.1px #000;">14.49</span>
<span class="t" style="left:1017.50px;top:670.40px;font-size:9px;line-height:9px;color:#000;-webkit-text-stroke:0.1px #000;">-</span>
<div class="b" style="left:28px;top:703px;width:1024px;height:1px;background:#dedfe1;"></div>
<span class="t" style="left:37.00px;top:691.34px;font-size:9px;line-height:9px;color:#000;letter-spacing:-0.15px;-webkit-text-stroke:0.1px #000;">SL45034</span>
<span class="t" style="left:119.00px;top:691.34px;font-size:9px;line-height:9px;color:#000;letter-spacing:-0.15px;-webkit-text-stroke:0.1px #000;">5050580856769</span>
<span class="t" style="left:202.00px;top:691.34px;font-size:9px;line-height:9px;color:#000;letter-spacing:-0.15px;-webkit-text-stroke:0.1px #000;">Myna</span>
<span class="t" style="left:277.00px;top:691.34px;font-size:9px;line-height:9px;color:#000;letter-spacing:-0.15px;-webkit-text-stroke:0.1px #000;">I Wanna Dance W...</span>
<span class="t" style="left:399.00px;top:691.34px;font-size:9px;line-height:9px;color:#000;-webkit-text-stroke:0.1px #000;">1</span>
<span class="t" style="left:474.00px;top:691.34px;font-size:9px;line-height:9px;color:#000;-webkit-text-stroke:0.1px #000;">0</span>
<span class="t" style="left:524.00px;top:691.34px;font-size:9px;line-height:9px;color:#000;letter-spacing:-0.15px;-webkit-text-stroke:0.1px #000;">Item No Longer Listed</span>
<span class="t" style="left:677.00px;top:691.34px;font-size:9px;line-height:9px;color:#000;letter-spacing:-0.15px;-webkit-text-stroke:0.1px #000;">7</span>
<span class="t" style="left:752.00px;top:691.34px;font-size:9px;line-height:9px;color:#000;letter-spacing:-0.15px;-webkit-text-stroke:0.1px #000;">Skyline Reco...</span>
<span class="t" style="left:828.00px;top:691.34px;font-size:9px;line-height:9px;color:#000;letter-spacing:-0.15px;-webkit-text-stroke:0.1px #000;">03/10/2025</span>
<span class="t" style="left:922.98px;top:691.34px;font-size:9px;line-height:9px;color:#000;-webkit-text-stroke:0.1px #000;">14.49</span>
<span class="t" style="left:1017.50px;top:691.34px;font-size:9px;line-height:9px;color:#000;-webkit-text-stroke:0.1px #000;">-</span>
<div class="b" style="left:28px;top:704px;width:1024px;height:20px;background:#f8f9fb;"></div>
<div class="b" style="left:28px;top:724px;width:1024px;height:1px;background:#dedfe1;"></div>
<span class="t" style="left:37.00px;top:712.28px;font-size:9px;line-height:9px;color:#000;letter-spacing:-0.15px;-webkit-text-stroke:0.1px #000;">SL45031</span>
<span class="t" style="left:119.00px;top:712.28px;font-size:9px;line-height:9px;color:#000;letter-spacing:-0.15px;-webkit-text-stroke:0.1px #000;">5050580820104</span>
<span class="t" style="left:202.00px;top:712.28px;font-size:9px;line-height:9px;color:#000;letter-spacing:-0.15px;-webkit-text-stroke:0.1px #000;">Maya Blandy</span>
<span class="t" style="left:277.00px;top:712.28px;font-size:9px;line-height:9px;color:#000;letter-spacing:-0.15px;-webkit-text-stroke:0.1px #000;">Lemons</span>
<span class="t" style="left:399.00px;top:712.28px;font-size:9px;line-height:9px;color:#000;-webkit-text-stroke:0.1px #000;">0</span>
<span class="t" style="left:474.00px;top:712.28px;font-size:9px;line-height:9px;color:#000;-webkit-text-stroke:0.1px #000;">0</span>
<span class="t" style="left:524.00px;top:712.28px;font-size:9px;line-height:9px;color:#000;letter-spacing:-0.15px;-webkit-text-stroke:0.1px #000;">Item No Longer Listed</span>
<span class="t" style="left:677.00px;top:712.28px;font-size:9px;line-height:9px;color:#000;letter-spacing:-0.15px;-webkit-text-stroke:0.1px #000;">7</span>
<span class="t" style="left:752.00px;top:712.28px;font-size:9px;line-height:9px;color:#000;letter-spacing:-0.15px;-webkit-text-stroke:0.1px #000;">Skyline Reco...</span>
<span class="t" style="left:828.00px;top:712.28px;font-size:9px;line-height:9px;color:#000;letter-spacing:-0.15px;-webkit-text-stroke:0.1px #000;">12/04/2024</span>
<span class="t" style="left:923.65px;top:712.28px;font-size:9px;line-height:9px;color:#000;-webkit-text-stroke:0.1px #000;">11.49</span>
<span class="t" style="left:1017.50px;top:712.28px;font-size:9px;line-height:9px;color:#000;-webkit-text-stroke:0.1px #000;">-</span>
<div class="b" style="left:28px;top:745px;width:1024px;height:1px;background:#dedfe1;"></div>
<span class="t" style="left:37.00px;top:733.22px;font-size:9px;line-height:9px;color:#000;letter-spacing:-0.15px;-webkit-text-stroke:0.1px #000;">SL45024</span>
<span class="t" style="left:119.00px;top:733.22px;font-size:9px;line-height:9px;color:#000;letter-spacing:-0.15px;-webkit-text-stroke:0.1px #000;">5050580800991</span>
<span class="t" style="left:202.00px;top:733.22px;font-size:9px;line-height:9px;color:#000;letter-spacing:-0.15px;-webkit-text-stroke:0.1px #000;">The Family F...</span>
<span class="t" style="left:277.00px;top:733.22px;font-size:9px;line-height:9px;color:#000;letter-spacing:-0.15px;-webkit-text-stroke:0.1px #000;">Cry Me A River</span>
<span class="t" style="left:399.00px;top:733.22px;font-size:9px;line-height:9px;color:#000;-webkit-text-stroke:0.1px #000;">0</span>
<span class="t" style="left:474.00px;top:733.22px;font-size:9px;line-height:9px;color:#000;-webkit-text-stroke:0.1px #000;">0</span>
<span class="t" style="left:524.00px;top:733.22px;font-size:9px;line-height:9px;color:#000;letter-spacing:-0.15px;-webkit-text-stroke:0.1px #000;">Item No Longer Listed</span>
<span class="t" style="left:677.00px;top:733.22px;font-size:9px;line-height:9px;color:#000;letter-spacing:-0.15px;-webkit-text-stroke:0.1px #000;">7</span>
<span class="t" style="left:752.00px;top:733.22px;font-size:9px;line-height:9px;color:#000;letter-spacing:-0.15px;-webkit-text-stroke:0.1px #000;">Skyline Reco...</span>
<span class="t" style="left:828.00px;top:733.22px;font-size:9px;line-height:9px;color:#000;letter-spacing:-0.15px;-webkit-text-stroke:0.1px #000;">17/03/2023</span>
<span class="t" style="left:922.98px;top:733.22px;font-size:9px;line-height:9px;color:#000;-webkit-text-stroke:0.1px #000;">12.49</span>
<span class="t" style="left:1017.50px;top:733.22px;font-size:9px;line-height:9px;color:#000;-webkit-text-stroke:0.1px #000;">-</span>
<div class="b" style="left:28px;top:746px;width:1024px;height:20px;background:#f8f9fb;"></div>
<div class="b" style="left:28px;top:766px;width:1024px;height:1px;background:#dedfe1;"></div>
<span class="t" style="left:37.00px;top:754.16px;font-size:9px;line-height:9px;color:#000;letter-spacing:-0.15px;-webkit-text-stroke:0.1px #000;">SL45028</span>
<span class="t" style="left:119.00px;top:754.16px;font-size:9px;line-height:9px;color:#000;letter-spacing:-0.15px;-webkit-text-stroke:0.1px #000;">5050580813717</span>
<span class="t" style="left:202.00px;top:754.16px;font-size:9px;line-height:9px;color:#000;letter-spacing:-0.15px;-webkit-text-stroke:0.1px #000;">Mike Bandoni</span>
<span class="t" style="left:277.00px;top:754.16px;font-size:9px;line-height:9px;color:#000;letter-spacing:-0.15px;-webkit-text-stroke:0.1px #000;">Get It</span>
<span class="t" style="left:399.00px;top:754.16px;font-size:9px;line-height:9px;color:#000;-webkit-text-stroke:0.1px #000;">0</span>
<span class="t" style="left:474.00px;top:754.16px;font-size:9px;line-height:9px;color:#000;-webkit-text-stroke:0.1px #000;">0</span>
<span class="t" style="left:524.00px;top:754.16px;font-size:9px;line-height:9px;color:#000;letter-spacing:-0.15px;-webkit-text-stroke:0.1px #000;">Item No Longer Listed</span>
<span class="t" style="left:677.00px;top:754.16px;font-size:9px;line-height:9px;color:#000;letter-spacing:-0.15px;-webkit-text-stroke:0.1px #000;">7</span>
<span class="t" style="left:752.00px;top:754.16px;font-size:9px;line-height:9px;color:#000;letter-spacing:-0.15px;-webkit-text-stroke:0.1px #000;">Skyline Reco...</span>
<span class="t" style="left:828.00px;top:754.16px;font-size:9px;line-height:9px;color:#000;letter-spacing:-0.15px;-webkit-text-stroke:0.1px #000;">20/10/2023</span>
<span class="t" style="left:922.98px;top:754.16px;font-size:9px;line-height:9px;color:#000;-webkit-text-stroke:0.1px #000;">15.49</span>
<span class="t" style="left:1017.50px;top:754.16px;font-size:9px;line-height:9px;color:#000;-webkit-text-stroke:0.1px #000;">-</span>
<div class="b" style="left:28px;top:787px;width:1024px;height:1px;background:#dedfe1;"></div>
<span class="t" style="left:37.00px;top:775.10px;font-size:9px;line-height:9px;color:#000;letter-spacing:-0.15px;-webkit-text-stroke:0.1px #000;">SL45032</span>
<span class="t" style="left:119.00px;top:775.10px;font-size:9px;line-height:9px;color:#000;letter-spacing:-0.15px;-webkit-text-stroke:0.1px #000;">5050580856721</span>
<span class="t" style="left:202.00px;top:775.10px;font-size:9px;line-height:9px;color:#000;letter-spacing:-0.15px;-webkit-text-stroke:0.1px #000;">Christen Asa...</span>
<span class="t" style="left:277.00px;top:775.10px;font-size:9px;line-height:9px;color:#000;letter-spacing:-0.15px;-webkit-text-stroke:0.1px #000;">Run To Me</span>
<span class="t" style="left:399.00px;top:775.10px;font-size:9px;line-height:9px;color:#000;-webkit-text-stroke:0.1px #000;">1</span>
<span class="t" style="left:474.00px;top:775.10px;font-size:9px;line-height:9px;color:#000;-webkit-text-stroke:0.1px #000;">0</span>
<span class="t" style="left:524.00px;top:775.10px;font-size:9px;line-height:9px;color:#000;letter-spacing:-0.15px;-webkit-text-stroke:0.1px #000;">Item No Longer Listed</span>
<span class="t" style="left:677.00px;top:775.10px;font-size:9px;line-height:9px;color:#000;letter-spacing:-0.15px;-webkit-text-stroke:0.1px #000;">7</span>
<span class="t" style="left:752.00px;top:775.10px;font-size:9px;line-height:9px;color:#000;letter-spacing:-0.15px;-webkit-text-stroke:0.1px #000;">Skyline Reco...</span>
<span class="t" style="left:828.00px;top:775.10px;font-size:9px;line-height:9px;color:#000;letter-spacing:-0.15px;-webkit-text-stroke:0.1px #000;">03/10/2025</span>
<span class="t" style="left:922.98px;top:775.10px;font-size:9px;line-height:9px;color:#000;-webkit-text-stroke:0.1px #000;">13.49</span>
<span class="t" style="left:1017.50px;top:775.10px;font-size:9px;line-height:9px;color:#000;-webkit-text-stroke:0.1px #000;">-</span>
<div class="b" style="left:28px;top:788px;width:1024px;height:20px;background:#f8f9fb;"></div>
<div class="b" style="left:28px;top:808px;width:1024px;height:1px;background:#cdd0d2;"></div>
<span class="t" style="left:37.00px;top:796.04px;font-size:9px;line-height:9px;color:#000;letter-spacing:-0.15px;-webkit-text-stroke:0.1px #000;">SL45026</span>
<span class="t" style="left:119.00px;top:796.04px;font-size:9px;line-height:9px;color:#000;letter-spacing:-0.15px;-webkit-text-stroke:0.1px #000;">5050580801196</span>
<span class="t" style="left:202.00px;top:796.04px;font-size:9px;line-height:9px;color:#000;letter-spacing:-0.15px;-webkit-text-stroke:0.1px #000;">The Family F...</span>
<span class="t" style="left:277.00px;top:796.04px;font-size:9px;line-height:9px;color:#000;letter-spacing:-0.15px;-webkit-text-stroke:0.1px #000;">Andys Cafe '68 Pa...</span>
<span class="t" style="left:399.00px;top:796.04px;font-size:9px;line-height:9px;color:#000;-webkit-text-stroke:0.1px #000;">0</span>
<span class="t" style="left:474.00px;top:796.04px;font-size:9px;line-height:9px;color:#000;-webkit-text-stroke:0.1px #000;">0</span>
<span class="t" style="left:524.00px;top:796.04px;font-size:9px;line-height:9px;color:#000;letter-spacing:-0.15px;-webkit-text-stroke:0.1px #000;">Item No Longer Listed</span>
<span class="t" style="left:677.00px;top:796.04px;font-size:9px;line-height:9px;color:#000;letter-spacing:-0.15px;-webkit-text-stroke:0.1px #000;">7</span>
<span class="t" style="left:752.00px;top:796.04px;font-size:9px;line-height:9px;color:#000;letter-spacing:-0.15px;-webkit-text-stroke:0.1px #000;">Skyline Reco...</span>
<span class="t" style="left:828.00px;top:796.04px;font-size:9px;line-height:9px;color:#000;letter-spacing:-0.15px;-webkit-text-stroke:0.1px #000;">17/03/2023</span>
<span class="t" style="left:923.65px;top:796.04px;font-size:9px;line-height:9px;color:#000;-webkit-text-stroke:0.1px #000;">11.49</span>
<span class="t" style="left:1017.50px;top:796.04px;font-size:9px;line-height:9px;color:#000;-webkit-text-stroke:0.1px #000;">-</span>
<svg class="b" style="left:1057px;top:390px" width="17" height="419" viewBox="0 0 17 419"><path d="M5 11.7 L9.5 5.2 L14 11.7 Z" fill="#8b8b8b"/><rect x="5" y="18" width="9" height="383" rx="4.5" fill="#8b8b8b"/><path d="M5 408.3 L9.5 414.7 L14 408.3 Z" fill="#8b8b8b"/></svg>
<div class="b" style="left:28px;top:809px;width:1046px;height:1px;background:#b4b4b4;"></div>
<span class="t" style="left:42.60px;top:818.08px;font-size:9px;line-height:9px;color:#9a9a9a;">Rows:</span>
<span class="t" style="left:70.11px;top:818.08px;font-size:9px;line-height:9px;color:#222;font-weight:bold;">34</span>
<span class="t" style="left:543.50px;top:818.08px;font-size:9px;line-height:9px;color:#9a9a9a;">Total Rows:</span>
<span class="t" style="left:592.52px;top:818.08px;font-size:9px;line-height:9px;color:#222;font-weight:bold;">34</span>
</body></html>
